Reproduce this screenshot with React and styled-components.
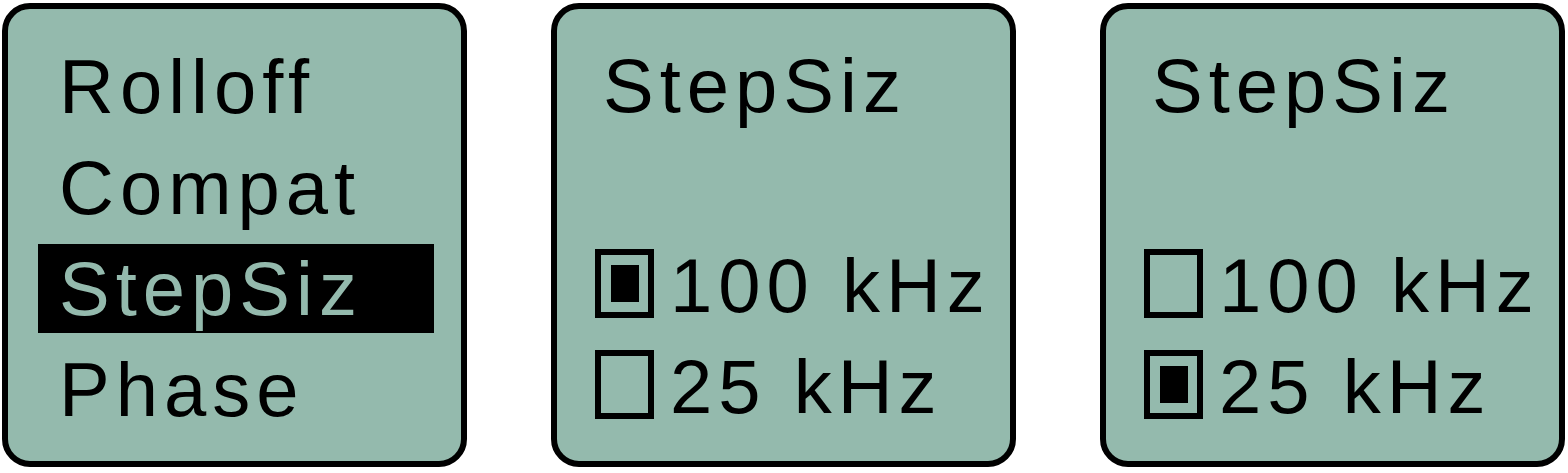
import styled, { createGlobalStyle } from "styled-components";

const lcd = "#94baad";

const GlobalStyle = createGlobalStyle`
    html, body {
        margin: 0;
        padding: 0;
        background: #ffffff;
    }
    body {
        font-family: "Liberation Sans", Arial, sans-serif;
    }
`;

const Screens = styled.div`
    display: flex;
    justify-content: space-between;
    width: 1568px;
    height: 473px;
    box-sizing: border-box;
    padding: 3px 3px 0 2px;
`;

const Panel = styled.div`
    display: flex;
    flex-direction: column;
    box-sizing: border-box;
    width: 465px;
    height: 464px;
    border: 6px solid #000;
    border-radius: 28px;
    background: ${lcd};
    padding: ${({ $menu }) => ($menu ? "33px 27px 0 30px" : "32px 0 30px 38px")};
    gap: ${({ $menu }) => ($menu ? "12px" : "0")};
`;

const Label = styled.div`
    font-size: 76px;
    line-height: 89px;
    height: 89px;
    letter-spacing: 6px;
    white-space: nowrap;
    color: #000;
`;

const MenuItem = styled(Label)`
    padding-left: 21px;
    background: ${({ $active }) => ($active ? "#000" : "transparent")};
    color: ${({ $active }) => ($active ? lcd : "#000")};
`;

const Title = styled(Label)`
    padding-left: 8px;
`;

const Options = styled.div`
    margin-top: auto;
    display: flex;
    flex-direction: column;
    gap: 12px;
`;

const Option = styled.div`
    display: flex;
    align-items: center;
    gap: 16px;
    height: 89px;
`;

const Box = styled.span`
    display: flex;
    align-items: center;
    justify-content: center;
    box-sizing: border-box;
    width: 59px;
    height: 69px;
    margin-top: -4px;
    border: 6px solid #000;
    flex-shrink: 0;

    &::after {
        content: "";
        display: ${({ $checked }) => ($checked ? "block" : "none")};
        width: 28px;
        height: 37px;
        background: #000;
    }
`;

const menu = ["Rolloff", "Compat", "StepSiz", "Phase"];

function StepScreen({ selected }) {
    return (
        <Panel>
            <Title>StepSiz</Title>
            <Options>
                {["100 kHz", "25 kHz"].map((opt) => (
                    <Option key={opt}>
                        <Box $checked={opt === selected} />
                        <Label>{opt}</Label>
                    </Option>
                ))}
            </Options>
        </Panel>
    );
}

export default function App() {
    return (
        <>
            <GlobalStyle />
            <Screens>
                <Panel $menu>
                    {menu.map((item) => (
                        <MenuItem key={item} $active={item === "StepSiz"}>
                            {item}
                        </MenuItem>
                    ))}
                </Panel>
                <StepScreen selected="100 kHz" />
                <StepScreen selected="25 kHz" />
            </Screens>
        </>
    );
}
